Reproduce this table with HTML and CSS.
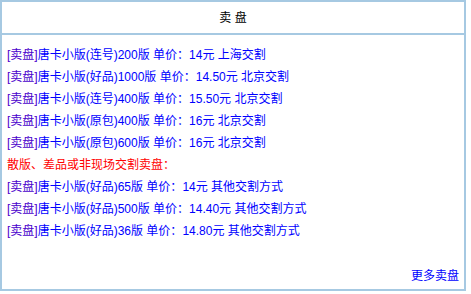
FILE: index.html
```html
<!DOCTYPE html>
<html lang="zh-CN">
<head>
<meta charset="utf-8">
<title>卖盘</title>
<link rel="stylesheet" href="styles.css">
</head>
<body>
<div class="panel">
  <div class="panel-head">卖 盘</div>
  <div class="panel-body">
    <ul class="list">
      <li><a class="tag">[卖盘]</a><a class="item">唐卡小版(连号)200版 单价<span class="colon">：</span>14元 上海交割</a></li>
      <li><a class="tag">[卖盘]</a><a class="item">唐卡小版(好品)1000版 单价<span class="colon">：</span>14.50元 北京交割</a></li>
      <li><a class="tag">[卖盘]</a><a class="item">唐卡小版(连号)400版 单价<span class="colon">：</span>15.50元 北京交割</a></li>
      <li><a class="tag">[卖盘]</a><a class="item">唐卡小版(原包)400版 单价<span class="colon">：</span>16元 北京交割</a></li>
      <li><a class="tag">[卖盘]</a><a class="item">唐卡小版(原包)600版 单价<span class="colon">：</span>16元 北京交割</a></li>
      <li class="notice">散版、差品或非现场交割卖盘<span class="colon">：</span></li>
      <li><a class="tag">[卖盘]</a><a class="item">唐卡小版(好品)65版 单价<span class="colon">：</span>14元 其他交割方式</a></li>
      <li><a class="tag">[卖盘]</a><a class="item">唐卡小版(好品)500版 单价<span class="colon">：</span>14.40元 其他交割方式</a></li>
      <li><a class="tag">[卖盘]</a><a class="item">唐卡小版(好品)36版 单价<span class="colon">：</span>14.80元 其他交割方式</a></li>
    </ul>
    <div class="more"><a class="item">更多卖盘</a></div>
  </div>
</div>
</body>
</html>
```
FILE: styles.css
```css
html, body {
  margin: 0;
  padding: 0;
  background: #ffffff;
}
body {
  font-family: "Liberation Sans", "Noto Sans CJK SC", sans-serif;
  font-size: 12px;
}
.panel {
  box-sizing: border-box;
  width: 466px;
  height: 291px;
  border: 2px solid #a6c9e2;
  display: flex;
  flex-direction: column;
}
.panel-head {
  height: 31px;
  line-height: 32px;
  text-align: center;
  color: #000000;
  border-bottom: 2px solid #a6c9e2;
}
.panel-body {
  flex: 1;
  display: flex;
  flex-direction: column;
  padding: 8px 5px 2px 5px;
}
.list {
  list-style: none;
  margin: 0;
  padding: 0;
  flex: 1;
}
.list li {
  line-height: 22px;
  height: 22px;
  white-space: nowrap;
}
.colon {
  font-family: "Noto Sans CJK TC", sans-serif;
}
.tag {
  color: #4a00cc;
}
.item {
  color: #0000ff;
}
.notice {
  color: #ff0000;
}
.more {
  text-align: right;
  line-height: 22px;
}
```
